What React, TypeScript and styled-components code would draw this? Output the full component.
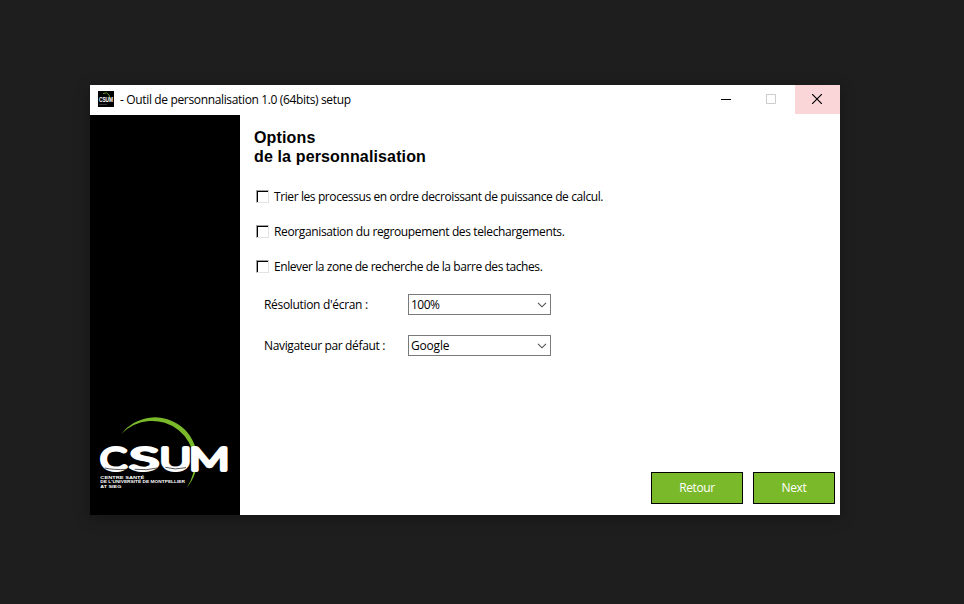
import React from "react";
import styled, { createGlobalStyle } from "styled-components";

const GlobalStyle = createGlobalStyle`
  * { box-sizing: border-box; }
  html, body { margin: 0; background: #1e1e1e; }
`;

const Desktop = styled.main`
  width: 964px;
  height: 604px;
  padding: 85px 0 0 90px;
  background: #1e1e1e;
  overflow: hidden;
  font-family: "Open Sans", "Noto Sans", sans-serif;
  font-size: 12px;
  color: #000;
`;

const Window = styled.section`
  width: 750px;
  height: 430px;
  display: flex;
  flex-direction: column;
  background: #fff;
  box-shadow: 0 3px 14px rgba(0, 0, 0, 0.35);
`;

const TitleBar = styled.header`
  height: 30px;
  flex: none;
  display: flex;
  align-items: flex-start;
  padding-left: 8px;
`;

const AppIcon = styled.svg`
  width: 16px;
  height: 16px;
  margin: 6px 6px 0 0;
  overflow: visible;
`;

const Label = styled.span<{ $spacing?: number }>`
  display: block;
  white-space: pre;
  line-height: 16px;
  letter-spacing: ${(p) => p.$spacing ?? 0}px;
`;

const Title = styled.div`
  flex: 1;
  padding-top: 7px;
  display: flex;
`;

const CaptionButton = styled.button<{ $close?: boolean }>`
  width: 45px;
  height: 29px;
  padding: 9px 0 0 ${(p) => (p.$close ? 17 : 16)}px;
  border: 0;
  display: flex;
  align-items: flex-start;
  background: ${(p) => (p.$close ? "#fbd6d9" : "transparent")};
  svg { display: block; }
`;

const Body = styled.div`
  flex: 1;
  display: flex;
`;

const Sidebar = styled.aside`
  width: 150px;
  background: #000;
  display: flex;
  align-items: flex-end;
  svg { display: block; }
`;

const Content = styled.div`
  flex: 1;
  display: flex;
  flex-direction: column;
  padding: 13px 5px 11px 14px;
`;

const Heading = styled.h1`
  margin: 0 0 20px;
  font: bold 16px/19px "Liberation Sans", Arial, sans-serif;
  white-space: pre-line;
  letter-spacing: 0.14px;
`;

const CheckList = styled.div`
  display: flex;
  flex-direction: column;
  gap: 15px;
  margin-bottom: 18px;
`;

const CheckRow = styled.label`
  height: 20px;
  padding: 3px 0 0 2px;
  display: flex;
  align-items: flex-start;
  gap: 5px;
`;

const CheckBox = styled.span`
  width: 13px;
  height: 13px;
  margin-top: 1px;
  border: 1px solid;
  border-color: #a0a0a0 #e3e3e3 #e3e3e3 #a0a0a0;
  box-shadow: inset 1px 1px 0 #000;
`;

const Field = styled.div`
  height: 21px;
  margin-bottom: 20px;
  padding-left: 10px;
  display: grid;
  grid-template-columns: 144px 143px;
  align-items: center;
`;

const Select = styled.div`
  height: 21px;
  padding: 1px 3px 0 2px;
  border: 1px solid #7a7a7a;
  display: flex;
  align-items: center;
  justify-content: space-between;
`;

const Actions = styled.footer`
  margin-top: auto;
  display: flex;
  justify-content: flex-end;
  gap: 10px;
`;

const ActionButton = styled.button<{ $width: number }>`
  width: ${(p) => p.$width}px;
  height: 32px;
  padding: 0 0 1px;
  border: 1px solid #000;
  background: #7ab929;
  color: #fff;
  font: inherit;
`;

const letters = [
  { char: "C", x: 31, width: 79 },
  { char: "S", x: 119, width: 87 },
  { char: "U", x: 209, width: 94 },
  { char: "M", x: 298, width: 120 },
];

function Logo() {
  return (
    <svg width="150" height="115" viewBox="0 0 450 345" aria-label="CSUM">
      <path d="M93 103A127 127 0 1 1 290 263A127.2 127.2 0 0 0 93 103Z" fill="#7ab929" />
      <g fill="#fff" stroke="#fff" strokeWidth="12" strokeLinejoin="round" fontFamily="Lato" fontWeight="300" fontSize="94">
        {letters.map((l) => (
          <text key={l.char} x={l.x} y="209" textLength={l.width} lengthAdjust="spacingAndGlyphs">{l.char}</text>
        ))}
      </g>
      <g fill="none" stroke="#000" strokeWidth="2">
        <path d="M44 204Q70 210 112 208M134 208Q170 212 202 204M226 202Q255 211 288 203" />
      </g>
      <g fill="#fff" fontFamily="Liberation Sans" fontWeight="700" fontSize="9.5">
        <text x="31" y="237" textLength="132" lengthAdjust="spacingAndGlyphs">CENTRE SANTÉ</text>
        <text x="31" y="250" textLength="254" lengthAdjust="spacingAndGlyphs">DE L'UNIVERSITÉ DE MONTPELLIER</text>
        <text x="31" y="263" textLength="63" lengthAdjust="spacingAndGlyphs">AT SIEG</text>
      </g>
    </svg>
  );
}

function Combo({ value, spacing }: { value: string; spacing: number }) {
  return (
    <Select>
      <Label $spacing={spacing}>{value}</Label>
      <svg width="10" height="6" viewBox="0 0 10 6">
        <path d="M1 .8L5 4.8L9 .8" fill="none" stroke="#505050" strokeWidth="1.1" />
      </svg>
    </Select>
  );
}

const options = [
  { text: "Trier les processus en ordre decroissant de puissance de calcul.", spacing: -0.4 },
  { text: "Reorganisation du regroupement des telechargements.", spacing: -0.37 },
  { text: "Enlever la zone de recherche de la barre des taches.", spacing: -0.42 },
];

export default function App() {
  return (
    <Desktop>
      <GlobalStyle />
      <Window>
        <TitleBar>
          <AppIcon viewBox="0 0 16 16">
            <rect width="16" height="16" />
            <path d="M5 2.5Q9 .5 11 4L11.5 6" fill="none" stroke="#5f9420" />
            <text x="1" y="11" fill="#fff" fontFamily="Liberation Sans" fontWeight="700" fontSize="6.5" textLength="14" lengthAdjust="spacingAndGlyphs">CSUM</text>
            <path d="M1 13.5H9" stroke="#333" />
          </AppIcon>
          <Title><Label $spacing={-0.35}>- Outil de personnalisation 1.0 (64bits) setup</Label></Title>
          <CaptionButton aria-label="Minimize">
            <svg width="10" height="10"><path d="M0 5.5H10" stroke="#000" /></svg>
          </CaptionButton>
          <CaptionButton aria-label="Maximize">
            <svg width="10" height="10"><path d="M.5 .5H9.5V9.5H.5Z" fill="none" stroke="#ccc" /></svg>
          </CaptionButton>
          <CaptionButton $close aria-label="Close">
            <svg width="10" height="10"><path d="M0 0L10 10M10 0L0 10" stroke="#000" strokeWidth="1.2" /></svg>
          </CaptionButton>
        </TitleBar>
        <Body>
          <Sidebar><Logo /></Sidebar>
          <Content>
            <Heading>{"Options\nde la personnalisation"}</Heading>
            <CheckList>
              {options.map((o) => (
                <CheckRow key={o.text}><CheckBox /><Label $spacing={o.spacing}>{o.text}</Label></CheckRow>
              ))}
            </CheckList>
            <Field><Label $spacing={-0.32}>Résolution d'écran :</Label><Combo value="100%" spacing={-0.5} /></Field>
            <Field><Label $spacing={-0.35}>Navigateur par défaut :</Label><Combo value="Google" spacing={-0.2} /></Field>
            <Actions>
              <ActionButton $width={92}><Label $spacing={-0.4}>Retour</Label></ActionButton>
              <ActionButton $width={82}><Label $spacing={-0.3}>Next</Label></ActionButton>
            </Actions>
          </Content>
        </Body>
      </Window>
    </Desktop>
  );
}
